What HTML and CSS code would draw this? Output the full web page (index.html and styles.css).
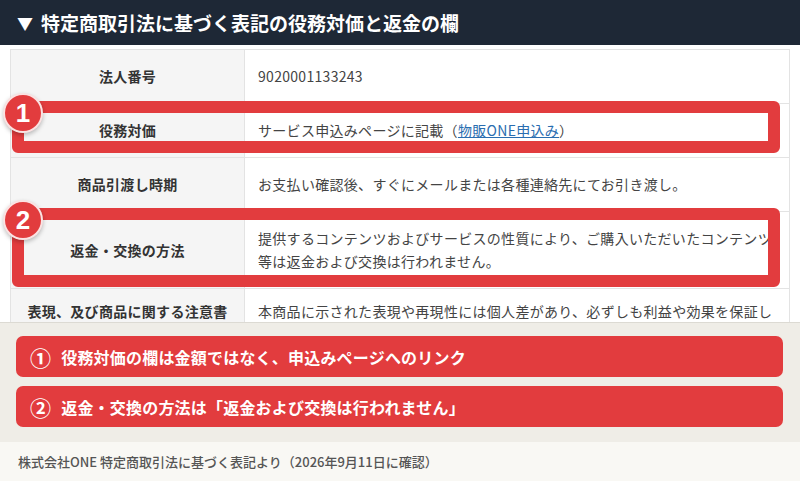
FILE: index.html
```html
<!DOCTYPE html>
<html lang="ja">
<head>
<meta charset="utf-8">
<title>特定商取引法に基づく表記の役務対価と返金の欄</title>
<link rel="stylesheet" href="styles.css">
</head>
<body>
<div class="page">
  <header class="titlebar"><span class="tri">▼</span>特定商取引法に基づく表記の役務対価と返金の欄</header>

  <section class="sheet">
    <div class="table-wrap">
      <table class="info">
        <tr><th>法人番号</th><td>9020001133243</td></tr>
        <tr><th>役務対価</th><td>サービス申込みページに記載（<a class="link" href="#">物販ONE申込み</a>）</td></tr>
        <tr><th>商品引渡し時期</th><td>お支払い確認後、すぐにメールまたは各種連絡先にてお引き渡し。</td></tr>
        <tr><th>返金・交換の方法</th><td>提供するコンテンツおよびサービスの性質により、ご購入いただいたコンテンツ等は返金および交換は行われません。</td></tr>
        <tr class="last"><th>表現、及び商品に関する注意書き</th><td>本商品に示された表現や再現性には個人差があり、必ずしも利益や効果を保証しないことをご了承ください。</td></tr>
      </table>
      <div class="mark mark-1"></div>
      <div class="mark mark-2"></div>
      <div class="badge badge-1">1</div>
      <div class="badge badge-2">2</div>
    </div>
  </section>

  <section class="notes">
    <div class="note"><span class="num">①</span>役務対価の欄は金額ではなく、申込みページへのリンク</div>
    <div class="note"><span class="num">②</span>返金・交換の方法は「返金および交換は行われません」</div>
  </section>

  <footer class="source">株式会社ONE 特定商取引法に基づく表記より（2026年9月11日に確認）</footer>
</div>
</body>
</html>
```

FILE: styles.css
```css
* { box-sizing: border-box; }

html, body {
  margin: 0;
  padding: 0;
  background: #ffffff;
}

body {
  font-family: "Noto Sans CJK JP", "Noto Sans", sans-serif;
  width: 800px;
  height: 481px;
  overflow: hidden;
}

.page {
  display: flex;
  flex-direction: column;
  height: 481px;
}

.titlebar {
  height: 45px;
  background: #1e2836;
  color: #ffffff;
  font-size: 19px;
  font-weight: 700;
  display: flex;
  align-items: center;
  padding-left: 17px;
  flex-shrink: 0;
}

.tri {
  font-size: 16px;
  margin-right: 8px;
}

.sheet {
  height: 277px;
  flex-shrink: 0;
  overflow: hidden;
  padding: 4px 10px 0 10px;
  background: #ffffff;
}

.table-wrap {
  position: relative;
  width: 780px;
}

.info {
  width: 780px;
  border-collapse: collapse;
  font-size: 14px;
  letter-spacing: 0.3px;
  line-height: 23px;
}

.info th,
.info td {
  border: 1px solid #e3e3e3;
  padding: 15px 15px 15px 13px;
  vertical-align: middle;
}

.info th {
  width: 234px;
  background: #f5f5f5;
  color: #333333;
  font-weight: 700;
  text-align: center;
  padding-left: 12px;
  padding-right: 12px;
}

.info td {
  color: #444444;
  text-align: left;
}

.info .last th,
.info .last td {
  vertical-align: top;
  padding-top: 11px;
}

.link {
  color: #2a6db0;
  text-decoration: underline;
}

.mark {
  position: absolute;
  left: 2px;
  width: 768px;
  border: 12px solid #e23c3e;
  border-radius: 6px;
}

.mark-1 { top: 52px; height: 52px; }
.mark-2 { top: 159px; height: 79px; }

.badge {
  position: absolute;
  left: -7px;
  width: 40px;
  height: 40px;
  border-radius: 50%;
  background: #e23c3e;
  border: 2px solid rgba(255, 255, 255, 0.85);
  box-shadow: 0 2px 4px rgba(0, 0, 0, 0.25);
  color: #ffffff;
  font-family: "Liberation Sans", Arial, sans-serif;
  font-weight: 700;
  font-size: 26px;
  display: flex;
  align-items: center;
  justify-content: center;
}

.badge-1 { top: 44px; }
.badge-2 { top: 151px; }

.notes {
  background: #efede7;
  border-top: 1px solid #dcdad3;
  padding: 13px 17px 15px 16px;
  display: flex;
  flex-direction: column;
  gap: 9px;
  flex-shrink: 0;
}

.note {
  height: 41px;
  border-radius: 7px;
  background: #e23c3e;
  color: #ffffff;
  font-size: 16px;
  font-weight: 700;
  letter-spacing: 0.2px;
  display: flex;
  align-items: center;
  padding-left: 14px;
}

.num {
  font-size: 21px;
  font-weight: 700;
  margin-right: 10px;
}

.source {
  flex: 1;
  background: #f9f8f4;
  color: #555555;
  font-size: 13px;
  font-weight: 500;
  display: flex;
  align-items: center;
  padding-left: 18px;
}
```
